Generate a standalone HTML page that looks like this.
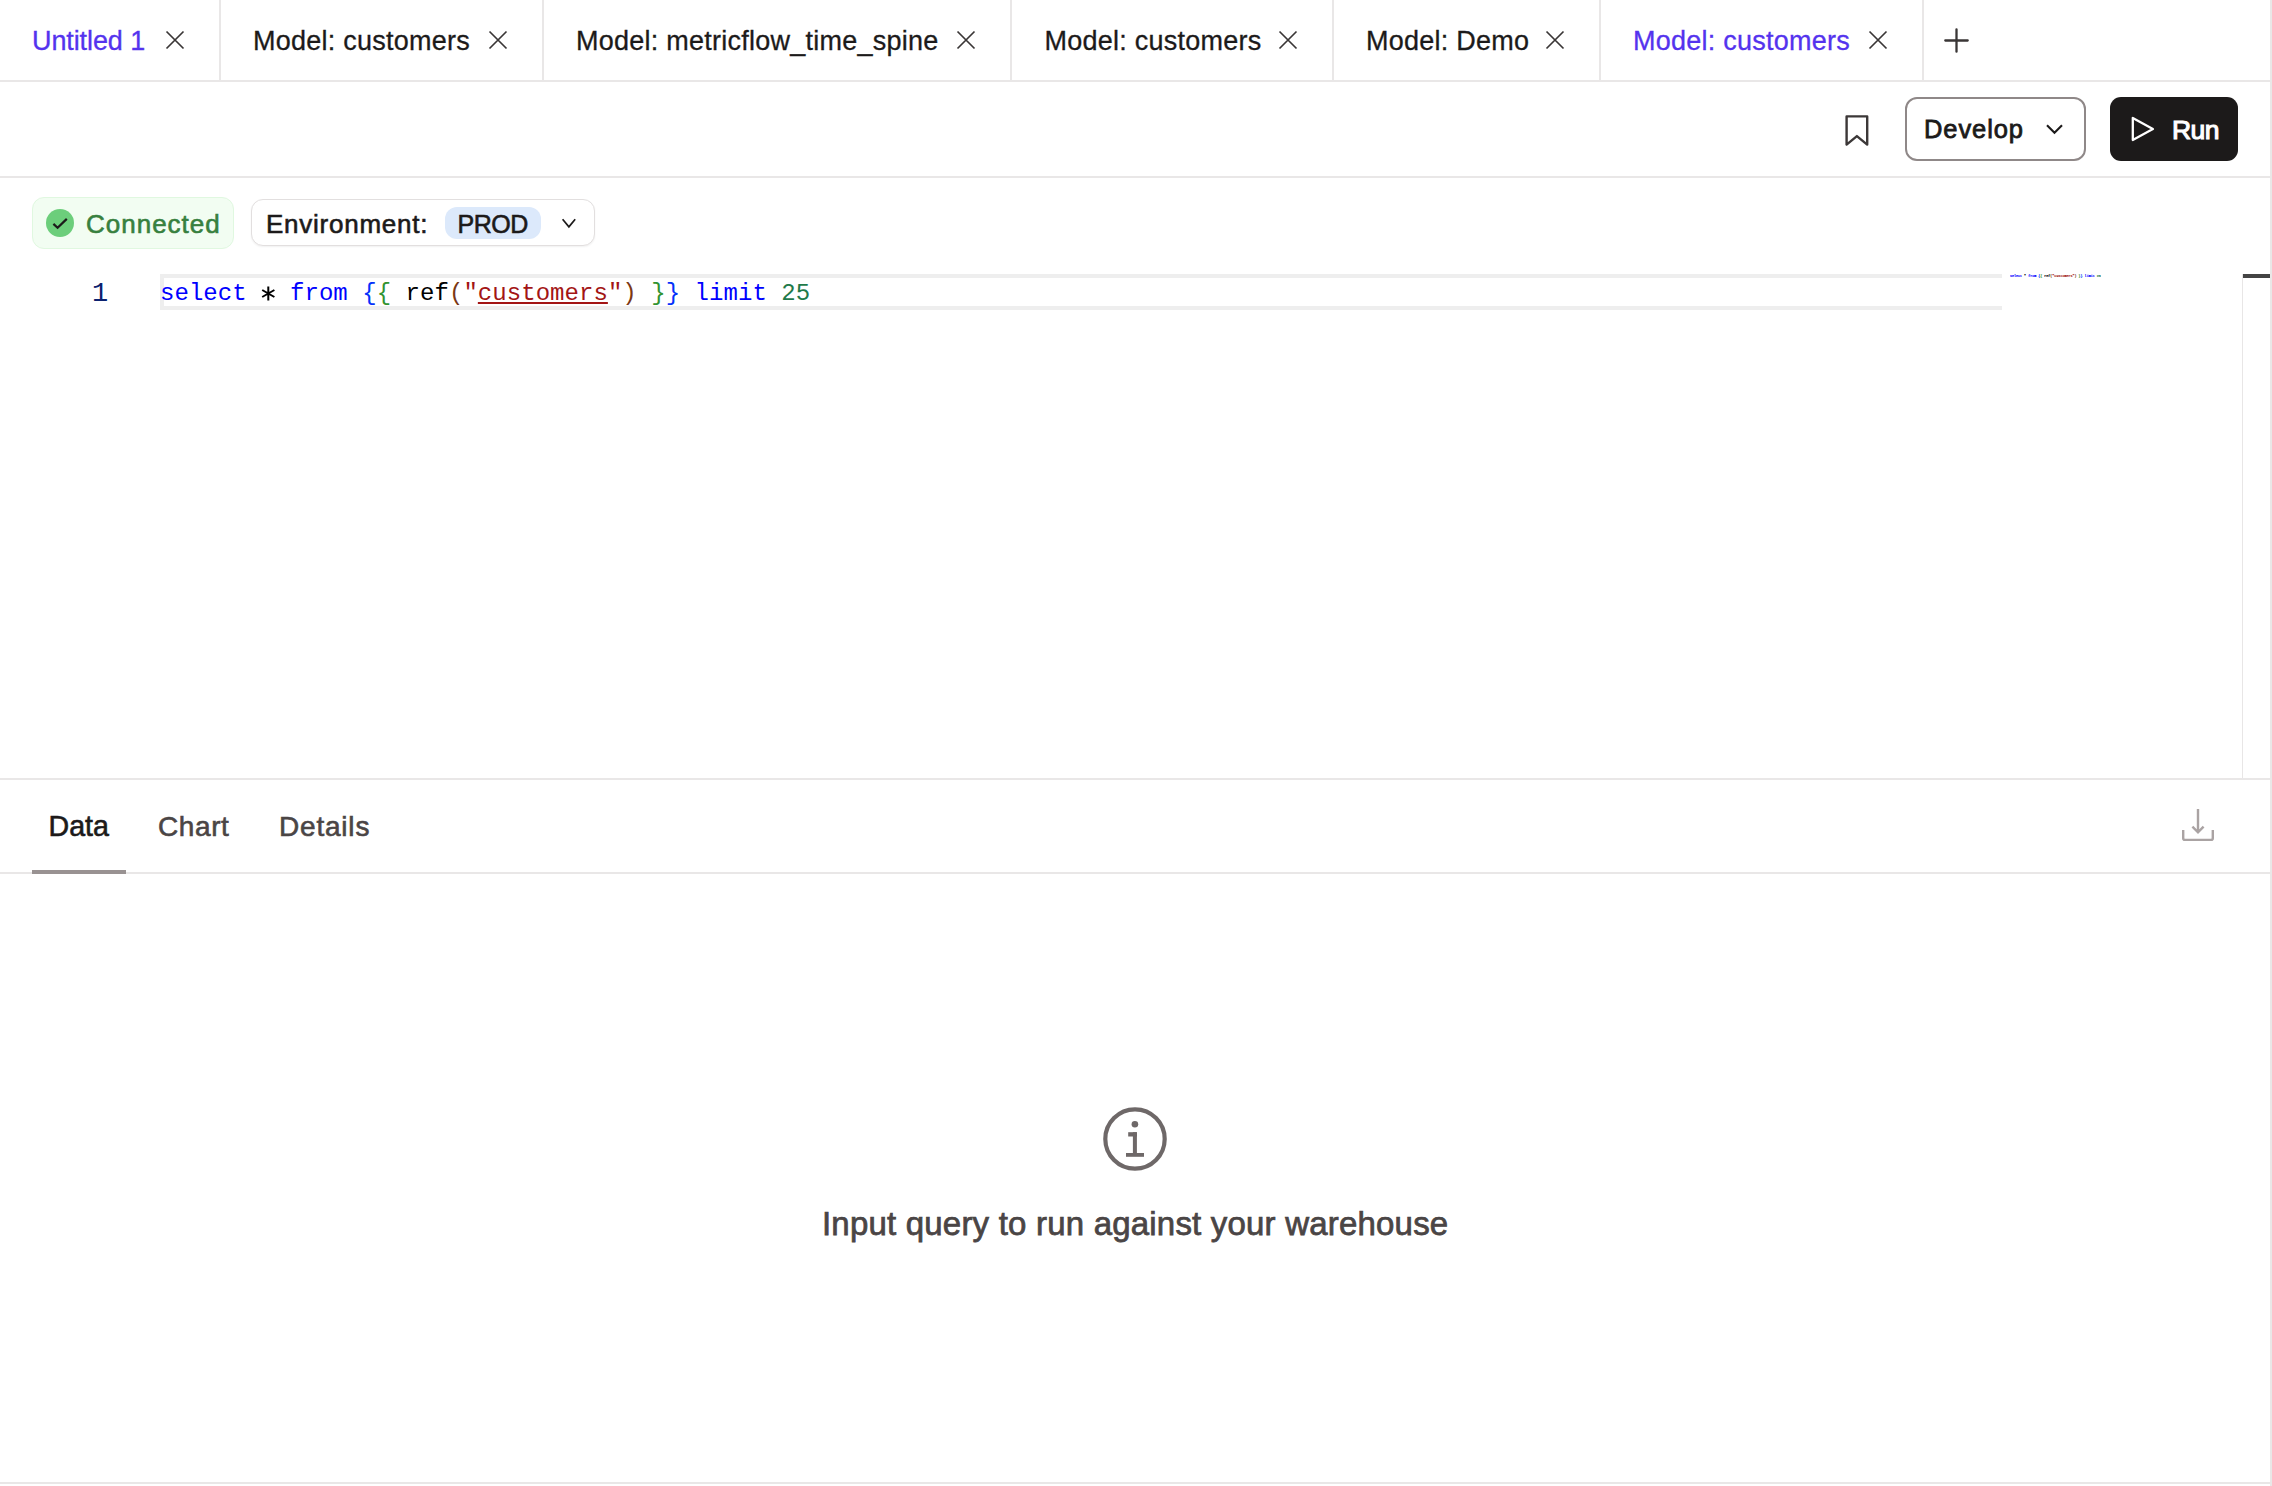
<!DOCTYPE html>
<html><head><meta charset="utf-8">
<style>
html,body{margin:0;padding:0;background:#fff;}
body{width:2272px;height:1486px;position:relative;overflow:hidden;font-family:"Liberation Sans",sans-serif;color:#1c1a1a;}
.a{position:absolute;}
.hl{position:absolute;background:#e9e7e7;}
.t{position:absolute;white-space:nowrap;line-height:1;}
.tab{font-size:27px;color:#1c1a1a;top:28.2px;letter-spacing:0.25px;-webkit-text-stroke:0.3px currentColor;}
.purple{color:#5433ee;}
.med{-webkit-text-stroke:0.6px currentColor;}
svg{position:absolute;overflow:visible;}
.code{font-family:"Liberation Mono",monospace;font-size:24px;white-space:pre;line-height:36px;position:absolute;}
</style></head><body>

<!-- tab bar -->
<div class="hl" style="left:0;top:80px;width:2270px;height:2px"></div>
<div class="hl" style="left:219px;top:0;width:2px;height:80px"></div>
<div class="hl" style="left:542px;top:0;width:2px;height:80px"></div>
<div class="hl" style="left:1010px;top:0;width:2px;height:80px"></div>
<div class="hl" style="left:1332px;top:0;width:2px;height:80px"></div>
<div class="hl" style="left:1599px;top:0;width:2px;height:80px"></div>
<div class="hl" style="left:1922px;top:0;width:2px;height:80px"></div>

<div class="t tab purple" style="left:32px;letter-spacing:-0.1px">Untitled 1</div>
<div class="t tab" style="left:253px">Model: customers</div>
<div class="t tab" style="left:576px">Model: metricflow_time_spine</div>
<div class="t tab" style="left:1044.5px">Model: customers</div>
<div class="t tab" style="left:1366px">Model: Demo</div>
<div class="t tab purple" style="left:1633px">Model: customers</div>

<svg style="left:166px;top:31px" width="18" height="18"><path d="M0.5 0.5L17.5 17.5M17.5 0.5L0.5 17.5" stroke="#3a3636" stroke-width="1.7"/></svg>
<svg style="left:489px;top:31px" width="18" height="18"><path d="M0.5 0.5L17.5 17.5M17.5 0.5L0.5 17.5" stroke="#3a3636" stroke-width="1.7"/></svg>
<svg style="left:957px;top:31px" width="18" height="18"><path d="M0.5 0.5L17.5 17.5M17.5 0.5L0.5 17.5" stroke="#3a3636" stroke-width="1.7"/></svg>
<svg style="left:1279px;top:31px" width="18" height="18"><path d="M0.5 0.5L17.5 17.5M17.5 0.5L0.5 17.5" stroke="#3a3636" stroke-width="1.7"/></svg>
<svg style="left:1546px;top:31px" width="18" height="18"><path d="M0.5 0.5L17.5 17.5M17.5 0.5L0.5 17.5" stroke="#3a3636" stroke-width="1.7"/></svg>
<svg style="left:1869px;top:31px" width="18" height="18"><path d="M0.5 0.5L17.5 17.5M17.5 0.5L0.5 17.5" stroke="#3a3636" stroke-width="1.7"/></svg>
<svg style="left:1944.5px;top:28.5px" width="23" height="23"><path d="M11.5 0.3V22.7M0.3 11.5H22.7" stroke="#3a3636" stroke-width="2.3" stroke-linecap="round"/></svg>

<!-- right border -->
<div class="hl" style="left:2270px;top:0;width:2px;height:1486px"></div>

<!-- toolbar -->
<div class="hl" style="left:0;top:176px;width:2270px;height:2px"></div>
<svg style="left:1845px;top:115px" width="24" height="32"><path d="M1.6 1.4H22.2V29.6L11.9 21.1L1.6 29.6Z" fill="none" stroke="#3c3838" stroke-width="2.4" stroke-linejoin="round"/></svg>
<div class="a" style="left:1905px;top:97px;width:177px;height:60px;border:2px solid #8f8888;border-radius:12px;"></div>
<div class="t" style="left:1924px;top:116.8px;font-size:25.5px;color:#1c1a1a;letter-spacing:0.9px;-webkit-text-stroke:0.8px #1c1a1a">Develop</div>
<svg style="left:2046px;top:124px" width="17" height="11"><path d="M1 1.2L8.5 8.7L16 1.2" fill="none" stroke="#1c1a1a" stroke-width="2.1"/></svg>
<div class="a" style="left:2110px;top:97px;width:128px;height:64px;background:#1c1a1a;border-radius:11px;"></div>
<svg style="left:2131px;top:116px" width="24" height="26"><path d="M1.8 1.9V24L21.9 13Z" fill="none" stroke="#fff" stroke-width="2.3" stroke-linejoin="round"/></svg>
<div class="t" style="left:2172px;top:117px;font-size:26.5px;color:#fff;letter-spacing:-0.6px;-webkit-text-stroke:1.1px #fff">Run</div>

<!-- status row -->
<div class="a" style="left:32px;top:197px;width:200px;height:50px;background:#f2fdf2;border:1.5px solid #e0f8e0;border-radius:12px;"></div>
<svg style="left:46px;top:209px" width="28" height="28"><circle cx="14" cy="14" r="14" fill="#6cce7b"/><path d="M7.4 14.9L11.6 18.8L20.8 9.9" fill="none" stroke="#1c1a1a" stroke-width="2.2"/></svg>
<div class="t med" style="left:86px;top:211px;font-size:26px;color:#37803e;letter-spacing:1px">Connected</div>
<div class="a" style="left:251px;top:199px;width:342px;height:45px;background:#fff;border:1.5px solid #e2dfdf;border-radius:12px;box-shadow:0 1px 2px rgba(0,0,0,0.06)"></div>
<div class="t med" style="left:266px;top:211px;font-size:26px;color:#1c1a1a;letter-spacing:0.75px">Environment:</div>
<div class="a" style="left:445px;top:207px;width:96px;height:32px;background:#dce9fb;border-radius:12px;"></div>
<div class="t med" style="left:457.5px;top:212px;font-size:25px;color:#1c1a1a;letter-spacing:-0.45px">PROD</div>
<svg style="left:562px;top:218px" width="14" height="11"><path d="M0.6 1.2L6.9 8.8L13.2 1.2" fill="none" stroke="#1c1a1a" stroke-width="1.7"/></svg>

<!-- editor -->
<div class="a" style="left:160px;top:274px;width:1842px;height:36px;box-sizing:border-box;border:4px solid #eeeeee;border-right:none;"></div>
<div class="code" style="left:92px;top:275.5px;color:#0b216f;font-size:27px;">1</div>
<div class="code" style="left:160px;top:276px;color:#000;letter-spacing:0.045px"><span style="color:#0000ff">select</span> <span style="display:inline-block;width:14.4px;height:10px;position:relative;"><svg style="left:0;top:-4px" width="15" height="16"><path d="M7.3 0.5V14.5M1.2 4L13.4 11M1.2 11L13.4 4" stroke="#000" stroke-width="2"/></svg></span> <span style="color:#0000ff">from</span> <span style="color:#0431fa">{</span><span style="color:#319331">{</span> ref<span style="color:#7b3814">(</span><span style="color:#a31515">"<u>customers</u>"</span><span style="color:#7b3814">)</span> <span style="color:#319331">}</span><span style="color:#0431fa">}</span> <span style="color:#0000ff">limit</span> <span style="color:#1f7a4a">25</span></div>
<div class="code" style="left:2010px;top:274px;color:#000;transform:scale(0.14);transform-origin:0 0;-webkit-text-stroke:1.5px currentColor"><span style="color:#0000ff">select</span> * <span style="color:#0000ff">from</span> <span style="color:#0431fa">{</span><span style="color:#319331">{</span> ref<span style="color:#7b3814">(</span><span style="color:#a31515">"customers"</span><span style="color:#7b3814">)</span> <span style="color:#319331">}</span><span style="color:#0431fa">}</span> <span style="color:#0000ff">limit</span> <span style="color:#1f7a4a">25</span></div>
<div class="a" style="left:2242px;top:274px;width:1px;height:504px;background:#e8e6e6;"></div>
<div class="a" style="left:2243px;top:274px;width:27px;height:4px;background:#444;"></div>

<!-- results panel -->
<div class="hl" style="left:0;top:778px;width:2270px;height:2px"></div>
<div class="hl" style="left:0;top:872px;width:2270px;height:2px"></div>
<div class="t med" style="left:48.5px;top:812.4px;font-size:28.6px;color:#1c1a1a;">Data</div>
<div class="t med" style="left:158px;top:813px;font-size:28px;color:#4a4545;letter-spacing:0.6px">Chart</div>
<div class="t med" style="left:279px;top:813px;font-size:28px;color:#4a4545;letter-spacing:0.8px">Details</div>
<div class="a" style="left:32px;top:870px;width:94px;height:4px;background:#999292;"></div>
<svg style="left:2180px;top:806px" width="36" height="36"><path d="M18 3V26.5M12.4 20.7L18 26.4L23.6 20.7M3.2 23.9V32.3Q3.2 33.9 4.8 33.9H31.2Q32.8 33.9 32.8 32.3V23.9" fill="none" stroke="#aaa3a3" stroke-width="2.4"/></svg>

<svg style="left:1090px;top:1095px" width="90" height="85"><circle cx="45" cy="44" r="29.7" fill="none" stroke="#6e6868" stroke-width="4.2"/><circle cx="44.9" cy="29.2" r="3.3" fill="#6e6868"/><rect x="38.2" y="37.2" width="8.7" height="4.3" fill="#6e6868"/><rect x="42.9" y="37.2" width="4" height="21.2" fill="#6e6868"/><rect x="36" y="58" width="18" height="3.8" fill="#6e6868"/></svg>
<div class="t med" style="left:822px;top:1207px;font-size:33px;color:#4a4545;letter-spacing:0.2px;-webkit-text-stroke:0.75px #4a4545">Input query to run against your warehouse</div>

<div class="hl" style="left:0;top:1482px;width:2270px;height:2px"></div>
</body></html>
